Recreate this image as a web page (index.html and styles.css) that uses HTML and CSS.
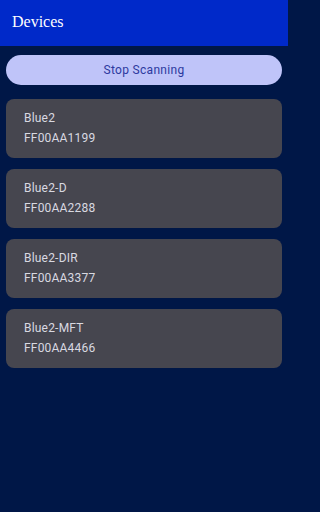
FILE: index.html
```html
<!DOCTYPE html>
<html>
<head>
<meta charset="utf-8">
<link rel="stylesheet" href="styles.css">
</head>
<body>
<div class="screen">
  <header class="appbar"><h1 class="title">Devices</h1></header>
  <main class="content">
    <button class="scan-btn">Stop Scanning</button>
    <ul class="devices">
      <li class="card"><div class="name">Blue2</div><div class="addr">FF00AA1199</div></li>
      <li class="card"><div class="name">Blue2-D</div><div class="addr">FF00AA2288</div></li>
      <li class="card"><div class="name">Blue2-DIR</div><div class="addr">FF00AA3377</div></li>
      <li class="card"><div class="name">Blue2-MFT</div><div class="addr">FF00AA4466</div></li>
    </ul>
  </main>
</div>
</body>
</html>
```
FILE: styles.css
```css
html, body {
  margin: 0;
  padding: 0;
  height: 100%;
  background: #001747;
}
body {
  font-family: Roboto, "Liberation Sans", sans-serif;
}
.screen {
  width: 288px;
  min-height: 512px;
  background: #001747;
}
.appbar {
  background: #0029c9;
  height: 46px;
  display: flex;
  align-items: center;
  padding: 0 12px;
  box-sizing: border-box;
}
.title {
  margin: 0;
  font-family: "Liberation Serif", serif;
  font-weight: normal;
  font-size: 16px;
  color: #ffffff;
  line-height: 1;
  position: relative;
  top: -1px;
}
.content {
  padding: 9px 6px 0;
  display: flex;
  flex-direction: column;
  gap: 14px;
}
.scan-btn {
  height: 30px;
  width: 100%;
  border: none;
  border-radius: 15px;
  background: #bfc4f9;
  color: #2d3a9f;
  font-family: Roboto, "Liberation Sans", sans-serif;
  font-size: 12px;
  letter-spacing: 0.3px;
  padding: 0;
}
.devices {
  list-style: none;
  margin: 0;
  padding: 0;
  display: flex;
  flex-direction: column;
  gap: 11px;
}
.card {
  background: #46464f;
  border-radius: 8px;
  padding: 9px 18px 10px;
  color: #d9d9e1;
  font-size: 12px;
  line-height: 20px;
  letter-spacing: 0.2px;
}
```
